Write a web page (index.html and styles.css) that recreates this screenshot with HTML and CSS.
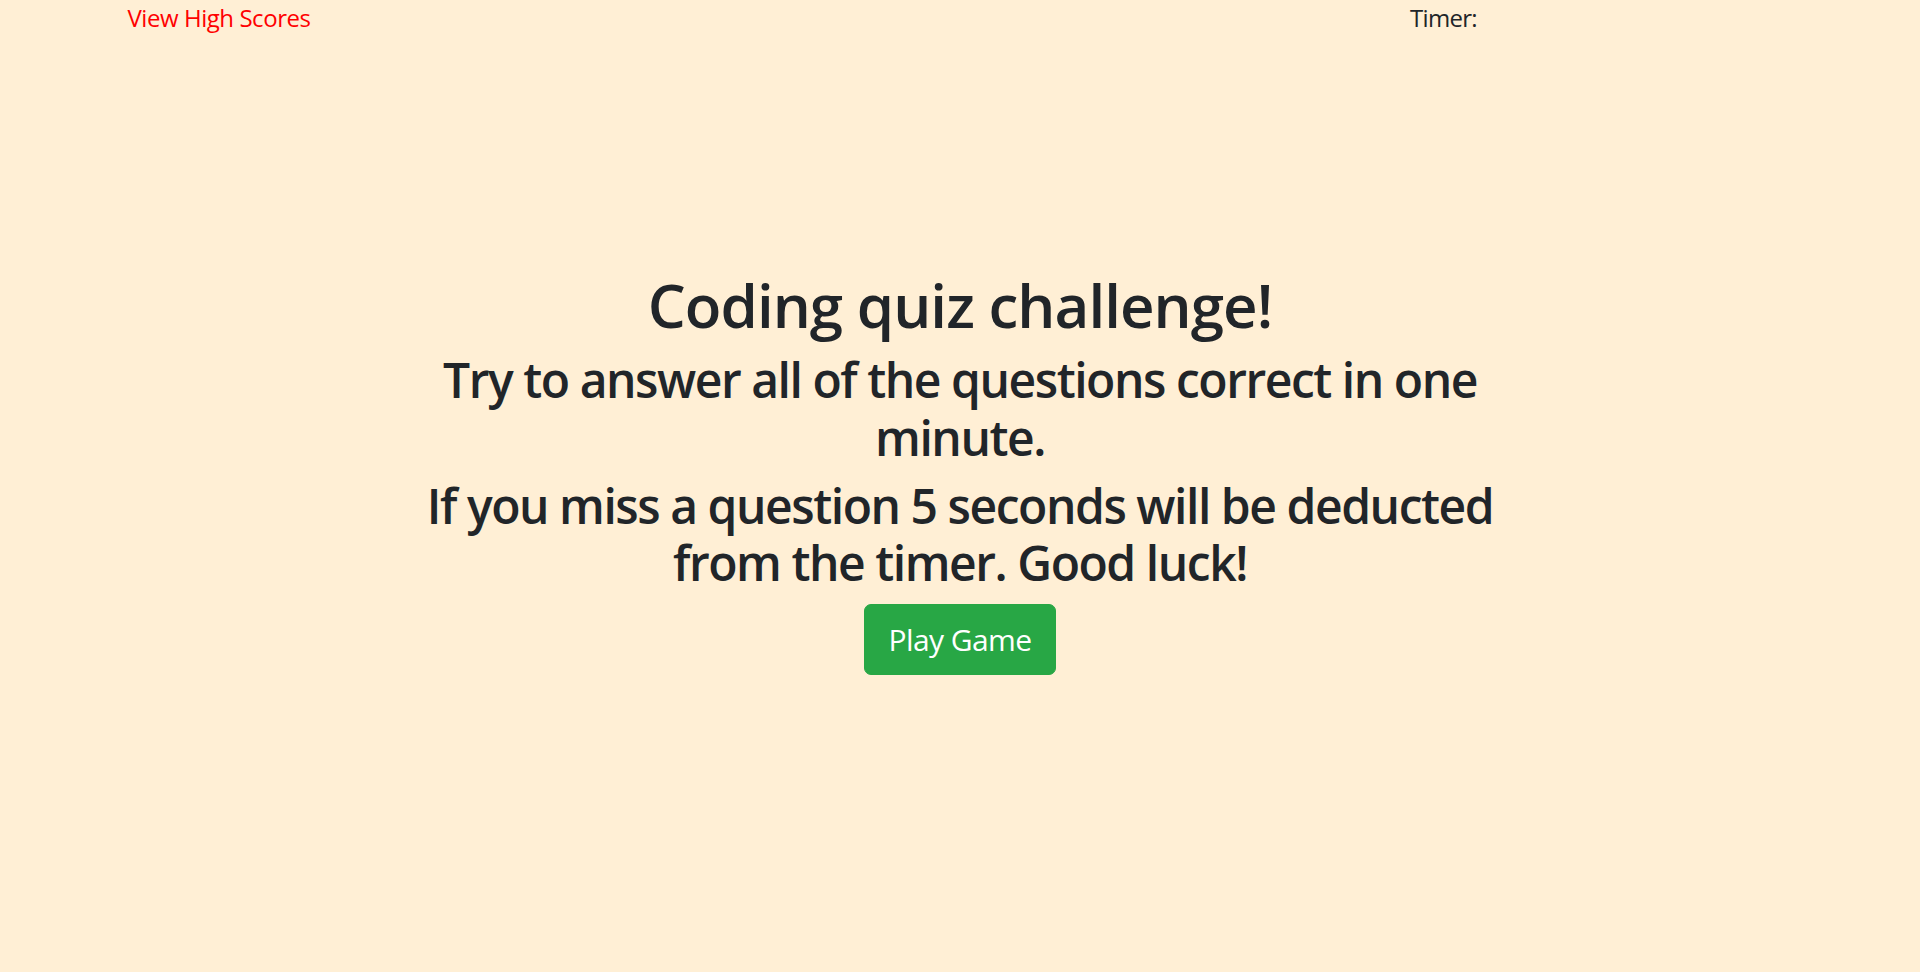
FILE: index.html
```html
<!DOCTYPE html>
<html lang="en">
<head>
<meta charset="utf-8">
<title>Coding Quiz</title>
<link rel="stylesheet" href="styles.css">
</head>
<body>
<header class="topbar">
  <div class="col-wide"><a class="scores-link" href="#">View High Scores</a></div>
  <div class="col-narrow"><span class="timer">Timer: </span></div>
</header>
<main class="intro">
  <h1 class="title">Coding quiz challenge!</h1>
  <h2 class="subtitle">Try to answer all of the questions correct in one minute.</h2>
  <h2 class="subtitle">If you miss a question 5 seconds will be deducted from the timer. Good luck!</h2>
  <button class="play-btn" type="button">Play Game</button>
</main>
</body>
</html>
```
FILE: styles.css
```css
html, body {
  margin: 0;
  padding: 0;
}
body {
  background: #ffefd5;
  color: #212529;
  font-family: "Open Sans", "Noto Sans", sans-serif;
  font-size: 24px;
  line-height: 1.5;
  letter-spacing: -0.45px;
}
.topbar {
  max-width: 1710px;
  margin: 0 auto;
  display: grid;
  grid-template-columns: 9fr 3fr;
}
.col-wide, .col-narrow {
  padding: 0 22.5px;
}
.timer {
  letter-spacing: -0.7px;
}
.scores-link {
  color: #ff0000;
  text-decoration: none;
}
.intro {
  max-width: 1095px;
  margin: 233px auto 0;
  padding: 0 22.5px;
  text-align: center;
}
.title {
  margin: 0 0 10px;
  font-size: 60px;
  font-weight: 600;
  line-height: 1.2;
  letter-spacing: -0.95px;
}
.subtitle {
  margin: 0 0 10.5px;
  font-size: 48px;
  font-weight: 600;
  line-height: 1.2;
  letter-spacing: -1.45px;
}
.subtitle + .subtitle {
  margin-bottom: 12px;
}
.play-btn {
  display: inline-block;
  font-family: inherit;
  letter-spacing: -0.6px;
  font-size: 30px;
  line-height: 45px;
  padding: 12px 24px;
  color: #fff;
  background: #28a745;
  border: 1px solid #28a745;
  border-radius: 7px;
  cursor: pointer;
}
```
